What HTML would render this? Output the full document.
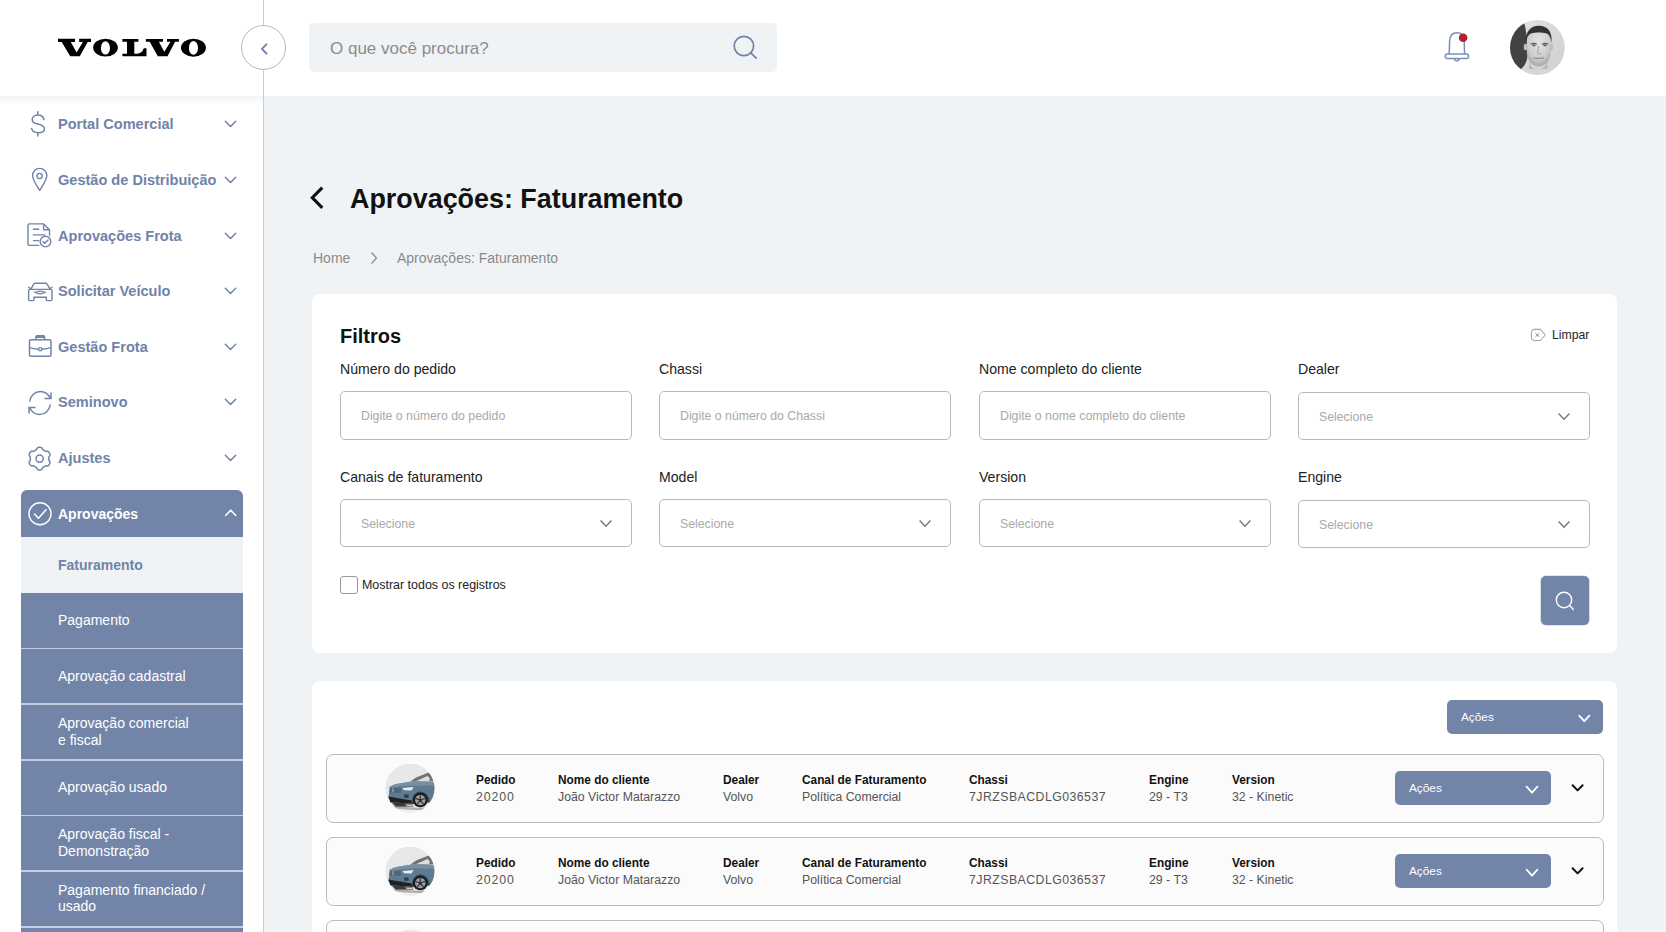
<!DOCTYPE html>
<html><head><meta charset="utf-8">
<style>
*{box-sizing:border-box;margin:0;padding:0}
html,body{width:1666px;height:932px;overflow:hidden;background:#eff3f6;font-family:"Liberation Sans",sans-serif;position:relative}
.a{position:absolute;white-space:nowrap;z-index:4}
#header{position:absolute;left:0;top:0;width:1666px;height:96px;background:#fff;z-index:2}
#sidebar{position:absolute;left:0;top:96px;width:263px;height:836px;background:#fff}
#vline{position:absolute;left:263px;top:0;width:1px;height:932px;background:#c5cddd;z-index:3}
.collapse{position:absolute;left:241px;top:25px;width:45px;height:45px;border:1px solid #aeb9d0;border-radius:50%;background:#fff;z-index:5}
.search{position:absolute;z-index:4;left:309px;top:23px;width:468px;height:49px;background:#eff3f6;border-radius:5px}
.mt{position:absolute;left:58px;font-size:14.55px;font-weight:bold;color:#7083a8;white-space:nowrap;line-height:18px}
.ic{position:absolute;left:26px;width:28px;height:28px}
.ch{position:absolute;left:223px;width:15px;height:10px}
.act{position:absolute;left:21px;top:490px;width:222px;height:442px;background:#7285a9;border-radius:6px 6px 0 0;overflow:hidden}
.sub{position:absolute;left:37px;color:#fff;font-size:14px;line-height:16.5px;white-space:nowrap}
.sep{position:absolute;left:0;width:222px;height:2px;background:#c3cce0}
.card{position:absolute;background:#fff;border-radius:8px}
.lbl{position:absolute;font-size:14.1px;color:#222;white-space:nowrap;line-height:18px}
.inp{position:absolute;width:291.5px;height:48.3px;border:1px solid #b9b9b9;border-radius:5px;background:#fff}
.inp span{position:absolute;left:20px;top:16.8px;font-size:12.3px;color:#a9a9a9;white-space:nowrap;line-height:15px}
.inp svg{position:absolute;left:258px;top:19.3px}
.row{position:absolute;left:326px;width:1278px;height:69px;border:1px solid #bbbbbb;border-radius:7px;background:#fbfbfb}
.rh{position:absolute;font-size:11.85px;font-weight:bold;color:#111;white-space:nowrap;line-height:14px}
.rv{position:absolute;font-size:12.3px;color:#555;white-space:nowrap;line-height:14px}
.btn{position:absolute;background:#7285a9;border-radius:5px}
.btn span{position:absolute;left:14px;font-size:11.8px;color:#fff;line-height:14px}
</style></head>
<body>
<div id="header"></div>
<div id="sidebar"></div>
<div style="position:absolute;left:0;top:96px;width:263px;height:8px;background:linear-gradient(#f0f3f7,rgba(255,255,255,0))"></div>
<div id="vline"></div>

<!-- logo -->
<svg class="a" style="left:0;top:0" width="263" height="96" viewBox="0 0 263 96">
<path fill="#000" d="M58 38.8 H75 V41.9 H70.8 L76.6 52.5 L82.9 41.9 H79.2 V38.8 H91 V41.9 H87.7 L79.8 56.3 H70.2 L61.7 41.9 H58 Z"/>
<path fill="#000" fill-rule="evenodd" d="M93.15 47.6 a12.35 8.9 0 1 0 24.7 0 a12.35 8.9 0 1 0 -24.7 0 Z M100.9 47.9 a4.55 6.7 0 1 0 9.1 0 a4.55 6.7 0 1 0 -9.1 0 Z"/>
<path fill="#000" d="M122.4 39.1 H138.4 V41.8 H134.3 V53.7 H137 Q142 53.7 143.8 48.3 H146.5 V56.2 H122.4 V53.7 H127 V41.8 H122.4 Z"/>
<path fill="#000" d="M145.9 39.1 H163 V41.8 H158.9 L164.3 51.8 L170.5 41.8 H167 V39.1 H178.9 V41.8 H175.1 L167.5 56.2 H157.8 L149.7 41.8 H145.9 Z"/>
<path fill="#000" fill-rule="evenodd" d="M181 47.7 a12.45 9 0 1 0 24.9 0 a12.45 9 0 1 0 -24.9 0 Z M188.9 47.9 a4.55 6.9 0 1 0 9.1 0 a4.55 6.9 0 1 0 -9.1 0 Z"/>
</svg>

<div class="collapse"><svg width="46" height="46" viewBox="0 0 46 46" style="position:absolute;left:-1px;top:-1px"><path d="M25.4 19.3 L20.9 23.9 L25.4 28.5" stroke="#7083a8" stroke-width="1.9" fill="none" stroke-linecap="round" stroke-linejoin="round"/></svg></div>

<div class="search"><span class="a" style="left:21px;top:16px;font-size:17px;color:#8c8c8c;line-height:20px">O que você procura?</span>
<svg class="a" style="left:421px;top:10px" width="30" height="30" viewBox="0 0 30 30"><circle cx="13.9" cy="13" r="9.7" stroke="#7083a8" stroke-width="1.7" fill="none"/><path d="M20.8 19.9 L26.2 25.2" stroke="#7083a8" stroke-width="1.7" stroke-linecap="round"/></svg>
</div>

<!-- bell -->
<svg class="a" style="left:1440px;top:28px" width="34" height="38" viewBox="0 0 34 38">
<path d="M9.2 26 L9.6 13.5 C9.8 8 12.5 4.8 16.9 4.8 C21.3 4.8 24 8 24.2 13.5 L24.6 26" stroke="#7a8fb8" stroke-width="1.5" fill="none"/>
<rect x="5.2" y="26" width="23.4" height="4.6" rx="2.3" stroke="#7a8fb8" stroke-width="1.5" fill="#fff"/>
<path d="M14.6 30.6 A2.3 2.3 0 0 0 19.2 30.6" stroke="#7a8fb8" stroke-width="1.5" fill="none"/>
<circle cx="23.1" cy="9.8" r="4.3" fill="#b3202e"/>
</svg>
<!-- avatar -->
<svg class="a" style="left:1509px;top:19px" width="58" height="58" viewBox="0 0 58 58">
<defs><clipPath id="av"><circle cx="28.4" cy="28.4" r="27.4"/></clipPath>
<linearGradient id="bgg" x1="0" y1="0" x2="1" y2="1"><stop offset="0" stop-color="#e2e2e2"/><stop offset="1" stop-color="#cfcfcf"/></linearGradient>
<radialGradient id="fg" cx="0.5" cy="0.35" r="0.65"><stop offset="0" stop-color="#e4e4e4"/><stop offset="0.7" stop-color="#cdcdcd"/><stop offset="1" stop-color="#a8a8a8"/></radialGradient></defs>
<g clip-path="url(#av)">
<rect width="58" height="58" fill="url(#bgg)"/>
<path d="M0 0 H14.3 C17 10 18.4 20 18.6 30 C18.8 38 18.8 44 11.9 50 L0 58 Z" fill="#424242"/>
<path d="M12 58 C14 52 18 49 22 47 H36 C40 49 44 52 46 58 Z" fill="#d6d6d6"/>
<path d="M20 42 C21 47 24 50 29 50.5 C34 50 37 47 38.5 42 L38.5 50 H20 Z" fill="#b9b9b9"/>
<ellipse cx="16.6" cy="28" rx="1.9" ry="3.3" fill="#bdbdbd"/>
<ellipse cx="42.3" cy="28" rx="1.9" ry="3.3" fill="#bdbdbd"/>
<path d="M17.8 22 C17.8 14 22 10 29.8 10 C37.5 10 41.6 14 41.6 22 V32 C41.6 41 36.5 47.5 29.7 47.5 C22.9 47.5 17.8 41 17.8 32 Z" fill="url(#fg)"/>
<path d="M16.8 24 C16 14 20.5 6.7 29.8 6.7 C39 6.7 43.5 13 42.6 24 C41.8 19 40.5 15.5 37 14.3 C33 13.3 26 13.3 22 14.5 C19 15.8 17.8 19 16.8 24 Z" fill="#333"/>
<path d="M21.6 25.2 C23.5 24.2 26 24.2 28 25.4 M32.8 25.4 C34.8 24.2 37.3 24.2 39.2 25.2" stroke="#5a5a5a" stroke-width="1.1" fill="none"/>
<ellipse cx="25" cy="26.3" rx="1.8" ry="0.9" fill="#555"/>
<ellipse cx="36" cy="26.3" rx="1.8" ry="0.9" fill="#555"/>
<path d="M29.5 27 C29.2 31 28.5 33 28.6 34.5 C29.5 35.2 31 35.2 32 34.5" stroke="#9a9a9a" stroke-width="0.9" fill="none"/>
<path d="M24.5 38.8 C27 39.6 32 39.6 35 38.8" stroke="#7c7c7c" stroke-width="1" fill="none"/>
</g>
</svg>

<!-- sidebar menu -->
<svg class="ic" style="top:110px" viewBox="0 0 28 28"><path d="M11.75 1.8 V5 M18 9.5 C17.3 6.5 15 5 11.9 5 C8.5 5 6.2 7 6.2 9.7 C6.2 12.5 8.8 13.4 11.8 14.1 C15.5 15 18.5 16 18.5 18.7 C18.5 21.2 15.8 22.7 12 22.7 C8.7 22.7 6.2 21 5.5 18.4 M11.75 22.7 V25.9" stroke="#7083a8" stroke-width="1.5" fill="none" stroke-linecap="round"/></svg>
<div class="mt" style="top:114.9px">Portal Comercial</div>
<svg class="ch" style="top:119px" viewBox="0 0 15 10"><path d="M2.3 2.3 L7.5 7.5 L12.7 2.3" stroke="#7083a8" stroke-width="1.5" fill="none" stroke-linecap="round" stroke-linejoin="round"/></svg>

<svg class="ic" style="top:166px" viewBox="0 0 28 28"><path d="M13.7 24.4 C9.7 18.5 6.6 14 6.6 9.6 C6.6 5.6 9.8 2.4 13.7 2.4 C17.6 2.4 20.8 5.6 20.8 9.6 C20.8 14 17.7 18.5 13.7 24.4 Z" stroke="#7083a8" stroke-width="1.4" fill="none" stroke-linejoin="round"/><circle cx="13.6" cy="10" r="2.6" stroke="#7083a8" stroke-width="1.4" fill="none"/></svg>
<div class="mt" style="top:170.9px">Gestão de Distribuição</div>
<svg class="ch" style="top:175px" viewBox="0 0 15 10"><path d="M2.3 2.3 L7.5 7.5 L12.7 2.3" stroke="#7083a8" stroke-width="1.5" fill="none" stroke-linecap="round" stroke-linejoin="round"/></svg>

<svg class="ic" style="top:222px" viewBox="0 0 28 28"><path d="M13.3 23.4 H3.5 C2.6 23.4 2 22.8 2 21.9 V3.4 C2 2.5 2.6 1.9 3.5 1.9 H17.6 L23.5 7.8 V13.7" stroke="#7083a8" stroke-width="1.4" fill="none" stroke-linejoin="round"/><path d="M17.6 1.9 V7.8 H23.5" stroke="#7083a8" stroke-width="1.4" fill="none" stroke-linejoin="round"/><path d="M6.9 7.3 H13.3 M6.9 12.9 H19.2 M6.9 18.6 H13.3" stroke="#7083a8" stroke-width="1.4"/><circle cx="19.5" cy="19.6" r="5.3" stroke="#7083a8" stroke-width="1.4" fill="#fff"/><path d="M16.8 19.5 L18.8 21.3 L22.1 18" stroke="#7083a8" stroke-width="1.4" fill="none" stroke-linecap="round" stroke-linejoin="round"/></svg>
<div class="mt" style="top:226.9px">Aprovações Frota</div>
<svg class="ch" style="top:231px" viewBox="0 0 15 10"><path d="M2.3 2.3 L7.5 7.5 L12.7 2.3" stroke="#7083a8" stroke-width="1.5" fill="none" stroke-linecap="round" stroke-linejoin="round"/></svg>

<svg class="ic" style="top:277px" viewBox="0 0 28 28"><path d="M4.7 12.4 L7.6 7.3 C8 6.6 8.6 6.2 9.4 6.2 H19.4 C20.2 6.2 20.8 6.6 21.2 7.3 L24.3 12.4" stroke="#7083a8" stroke-width="1.4" fill="none" stroke-linejoin="round"/><path d="M2.6 10.3 L5.5 12.4 M26 10.3 L23.2 12.4" stroke="#7083a8" stroke-width="1.4" stroke-linecap="round"/><path d="M4 12.4 H24.8 C25.5 12.4 26 12.9 26 13.6 V22.6 C26 23.2 25.6 23.6 25 23.6 H21.2 C20.6 23.6 20.3 23.2 20.3 22.6 V20.3 H7.9 V22.6 C7.9 23.2 7.5 23.6 6.9 23.6 H3.6 C3 23.6 2.6 23.2 2.6 22.6 V13.6 C2.6 12.9 3.2 12.4 4 12.4 Z" stroke="#7083a8" stroke-width="1.4" fill="none" stroke-linejoin="round"/><path d="M7.9 14.8 C10 16.3 12 16.8 14.2 16.8 C16.4 16.8 18.3 16.3 20 14.8 M9.5 15.5 L12 14.4 H16.5 L18.5 15.5" stroke="#7083a8" stroke-width="1.3" fill="none"/></svg>
<div class="mt" style="top:281.9px">Solicitar Veículo</div>
<svg class="ch" style="top:286px" viewBox="0 0 15 10"><path d="M2.3 2.3 L7.5 7.5 L12.7 2.3" stroke="#7083a8" stroke-width="1.5" fill="none" stroke-linecap="round" stroke-linejoin="round"/></svg>

<svg class="ic" style="top:332px" viewBox="0 0 28 28"><rect x="3.5" y="7.8" width="21.5" height="16.4" rx="1.3" stroke="#7083a8" stroke-width="1.5" fill="none"/><path d="M10 7.8 V4.6 C10 4.1 10.3 3.8 10.8 3.8 H17.7 C18.2 3.8 18.5 4.1 18.5 4.6 V7.8 M10.5 5.2 H18" stroke="#7083a8" stroke-width="1.5" fill="none"/><path d="M3.5 15.6 C8 16.8 11 17.2 12.7 17.2 M15.8 17.2 C17.5 17.2 20.5 16.8 25 15.6" stroke="#7083a8" stroke-width="1.5" fill="none"/><circle cx="14.2" cy="17.2" r="1.6" stroke="#7083a8" stroke-width="1.4" fill="none"/></svg>
<div class="mt" style="top:337.9px">Gestão Frota</div>
<svg class="ch" style="top:342px" viewBox="0 0 15 10"><path d="M2.3 2.3 L7.5 7.5 L12.7 2.3" stroke="#7083a8" stroke-width="1.5" fill="none" stroke-linecap="round" stroke-linejoin="round"/></svg>

<svg class="ic" style="top:388.8px" viewBox="0 0 28 28"><path d="M3.6 12.5 C4.6 6.5 9 2.5 14.3 2.5 C18.7 2.5 22.3 5 24.1 9 M24.4 15.5 C23.4 21.5 19 25.5 13.7 25.5 C9.3 25.5 5.7 23 3.9 19" stroke="#7083a8" stroke-width="1.5" fill="none"/><path d="M25 3.5 V9.6 H18.5 M3 24.5 V18.4 H9.5" stroke="#7083a8" stroke-width="1.5" fill="none"/></svg>
<div class="mt" style="top:392.9px">Seminovo</div>
<svg class="ch" style="top:397px" viewBox="0 0 15 10"><path d="M2.3 2.3 L7.5 7.5 L12.7 2.3" stroke="#7083a8" stroke-width="1.5" fill="none" stroke-linecap="round" stroke-linejoin="round"/></svg>

<svg class="ic" style="top:443.8px" viewBox="0 0 28 28"><path d="M22.90 14.60 L22.90 15.01 L22.88 15.41 L22.88 15.82 L22.94 16.25 L23.14 16.72 L23.55 17.27 L23.93 17.86 L24.05 18.40 L23.98 18.90 L23.82 19.37 L23.62 19.82 L23.39 20.25 L23.13 20.67 L22.84 21.07 L22.52 21.44 L22.12 21.75 L21.58 21.92 L20.88 21.88 L20.20 21.80 L19.69 21.86 L19.30 22.03 L18.95 22.23 L18.60 22.45 L18.25 22.65 L17.90 22.85 L17.54 23.05 L17.18 23.25 L16.84 23.51 L16.54 23.92 L16.27 24.55 L15.94 25.17 L15.53 25.55 L15.07 25.74 L14.58 25.84 L14.09 25.89 L13.60 25.90 L13.11 25.89 L12.62 25.84 L12.13 25.74 L11.67 25.55 L11.26 25.17 L10.93 24.55 L10.66 23.92 L10.36 23.51 L10.02 23.25 L9.66 23.05 L9.30 22.85 L8.95 22.65 L8.60 22.45 L8.25 22.23 L7.90 22.03 L7.51 21.86 L7.00 21.80 L6.32 21.88 L5.62 21.92 L5.08 21.75 L4.68 21.44 L4.36 21.07 L4.07 20.67 L3.81 20.25 L3.58 19.82 L3.38 19.37 L3.22 18.90 L3.15 18.40 L3.27 17.86 L3.65 17.27 L4.06 16.72 L4.26 16.25 L4.32 15.82 L4.32 15.41 L4.30 15.01 L4.30 14.60 L4.30 14.19 L4.32 13.79 L4.32 13.38 L4.26 12.95 L4.06 12.48 L3.65 11.93 L3.27 11.34 L3.15 10.80 L3.22 10.30 L3.38 9.83 L3.58 9.38 L3.81 8.95 L4.07 8.53 L4.36 8.13 L4.68 7.76 L5.08 7.45 L5.62 7.28 L6.32 7.32 L7.00 7.40 L7.51 7.34 L7.90 7.17 L8.25 6.97 L8.60 6.75 L8.95 6.55 L9.30 6.35 L9.66 6.15 L10.02 5.95 L10.36 5.69 L10.66 5.28 L10.93 4.65 L11.26 4.03 L11.67 3.65 L12.13 3.46 L12.62 3.36 L13.11 3.31 L13.60 3.30 L14.09 3.31 L14.58 3.36 L15.07 3.46 L15.53 3.65 L15.94 4.03 L16.27 4.65 L16.54 5.28 L16.84 5.69 L17.18 5.95 L17.54 6.15 L17.90 6.35 L18.25 6.55 L18.60 6.75 L18.95 6.97 L19.30 7.17 L19.69 7.34 L20.20 7.40 L20.88 7.32 L21.58 7.28 L22.12 7.45 L22.52 7.76 L22.84 8.13 L23.13 8.53 L23.39 8.95 L23.62 9.38 L23.82 9.83 L23.98 10.30 L24.05 10.80 L23.93 11.34 L23.55 11.93 L23.14 12.48 L22.94 12.95 L22.88 13.38 L22.88 13.79 L22.90 14.19 Z" stroke="#7083a8" stroke-width="1.5" fill="none" stroke-linejoin="round"/><circle cx="13.6" cy="14.6" r="3.6" stroke="#7083a8" stroke-width="1.5" fill="none"/></svg>
<div class="mt" style="top:448.9px">Ajustes</div>
<svg class="ch" style="top:453px" viewBox="0 0 15 10"><path d="M2.3 2.3 L7.5 7.5 L12.7 2.3" stroke="#7083a8" stroke-width="1.5" fill="none" stroke-linecap="round" stroke-linejoin="round"/></svg>

<!-- active group -->
<div class="act">
  <svg class="a" style="left:5px;top:10px" width="28" height="28" viewBox="0 0 28 28"><circle cx="14" cy="13.8" r="11" stroke="#fff" stroke-width="1.4" fill="none"/><path d="M8.5 14 L12.5 18.2 L20 9.8" stroke="#fff" stroke-width="1.5" fill="none" stroke-linecap="round" stroke-linejoin="round"/></svg>
  <div class="a" style="left:37px;top:14.8px;font-size:14px;font-weight:bold;color:#fff;line-height:18px">Aprovações</div>
  <svg class="a" style="left:202px;top:17px" width="15" height="10" viewBox="0 0 15 10"><path d="M2.8 8.3 L7.7 3.2 L12.6 8.3" stroke="#fff" stroke-width="1.6" fill="none" stroke-linecap="round" stroke-linejoin="round"/></svg>
  <div class="a" style="left:0;top:47px;width:222px;height:55.6px;background:#eff3f6"></div>
  <div class="a" style="left:37px;top:67.3px;font-size:14px;font-weight:bold;color:#7083a8;line-height:17px">Faturamento</div>
  <div class="sub" style="top:122px">Pagamento</div>
  <div class="sep" style="top:157.5px;height:1.5px"></div>
  <div class="sub" style="top:177.5px">Aprovação cadastral</div>
  <div class="sep" style="top:213px;height:1.5px"></div>
  <div class="sub" style="top:225px">Aprovação comercial<br>e fiscal</div>
  <div class="sep" style="top:269px;height:1.5px"></div>
  <div class="sub" style="top:289px">Aprovação usado</div>
  <div class="sep" style="top:324.5px;height:1.5px"></div>
  <div class="sub" style="top:336px">Aprovação fiscal -<br>Demonstração</div>
  <div class="sep" style="top:380px;height:1.5px"></div>
  <div class="sub" style="top:391.5px">Pagamento financiado /<br>usado</div>
  <div class="sep" style="top:436px;height:1.5px"></div>
</div>

<!-- title -->
<svg class="a" style="left:306px;top:183px" width="22" height="30" viewBox="0 0 22 30"><path d="M16.3 4.6 L6.3 14.7 L16.3 24.8" stroke="#111" stroke-width="3.1" fill="none" stroke-linecap="butt" stroke-linejoin="miter"/></svg>
<div class="a" style="left:350px;top:182.8px;font-size:26.9px;font-weight:bold;color:#111;line-height:32px">Aprovações: Faturamento</div>
<div class="a" style="left:313px;top:250px;font-size:14px;color:#8a8a8a;line-height:17px">Home</div>
<svg class="a" style="left:366px;top:250px" width="16" height="16" viewBox="0 0 16 16"><path d="M5.5 2.5 L10.5 8 L5.5 13.5" stroke="#8a8a8a" stroke-width="1.3" fill="none"/></svg>
<div class="a" style="left:397px;top:250px;font-size:14px;color:#8a8a8a;line-height:17px">Aprovações: Faturamento</div>

<!-- filters card -->
<div class="card" style="left:312px;top:294px;width:1305px;height:359px"></div>
<div class="a" style="left:340px;top:323.5px;font-size:20px;font-weight:bold;color:#111;line-height:24px">Filtros</div>
<svg class="a" style="left:1530px;top:328px" width="17" height="14" viewBox="0 0 17 14"><path d="M4.7 1.4 H10.3 L15.3 7 L10.3 12.5 H4.7 C2.8 12.5 1.4 11.1 1.4 9.2 V4.7 C1.4 2.8 2.8 1.4 4.7 1.4 Z" stroke="#a5a5a5" stroke-width="1.1" fill="none" stroke-linejoin="round"/><path d="M5.4 5.2 L9.3 8.9 M9.3 5.2 L5.4 8.9" stroke="#8a8a8a" stroke-width="1"/></svg>
<div class="a" style="left:1552px;top:327px;font-size:12.2px;color:#222;line-height:16px">Limpar</div>

<div class="lbl" style="left:340px;top:360px">Número do pedido</div>
<div class="inp" style="left:340px;top:391.4px"><span>Digite o número do pedido</span></div>
<div class="lbl" style="left:659px;top:360px">Chassi</div>
<div class="inp" style="left:659px;top:391.4px"><span>Digite o número do Chassi</span></div>
<div class="lbl" style="left:979px;top:360px">Nome completo do cliente</div>
<div class="inp" style="left:979px;top:391.4px"><span>Digite o nome completo do cliente</span></div>
<div class="lbl" style="left:1298px;top:360px">Dealer</div>
<div class="inp" style="left:1298px;top:392px"><span>Selecione</span><svg width="14" height="9" viewBox="0 0 14 9"><path d="M1.6 1.5 L7 7.2 L12.4 1.5" stroke="#777" stroke-width="1.4" fill="none"/></svg></div>

<div class="lbl" style="left:340px;top:468px">Canais de faturamento</div>
<div class="inp" style="left:340px;top:499px"><span>Selecione</span><svg width="14" height="9" viewBox="0 0 14 9"><path d="M1.6 1.5 L7 7.2 L12.4 1.5" stroke="#777" stroke-width="1.4" fill="none"/></svg></div>
<div class="lbl" style="left:659px;top:468px">Model</div>
<div class="inp" style="left:659px;top:499px"><span>Selecione</span><svg width="14" height="9" viewBox="0 0 14 9"><path d="M1.6 1.5 L7 7.2 L12.4 1.5" stroke="#777" stroke-width="1.4" fill="none"/></svg></div>
<div class="lbl" style="left:979px;top:468px">Version</div>
<div class="inp" style="left:979px;top:499px"><span>Selecione</span><svg width="14" height="9" viewBox="0 0 14 9"><path d="M1.6 1.5 L7 7.2 L12.4 1.5" stroke="#777" stroke-width="1.4" fill="none"/></svg></div>
<div class="lbl" style="left:1298px;top:468px">Engine</div>
<div class="inp" style="left:1298px;top:500px"><span>Selecione</span><svg width="14" height="9" viewBox="0 0 14 9"><path d="M1.6 1.5 L7 7.2 L12.4 1.5" stroke="#777" stroke-width="1.4" fill="none"/></svg></div>

<div class="a" style="left:340px;top:576px;width:17.5px;height:17.5px;border:1px solid #9a9a9a;border-radius:3px;background:#fff"></div>
<div class="a" style="left:362px;top:576.8px;font-size:12.45px;color:#222;line-height:16px">Mostrar todos os registros</div>
<div class="btn" style="left:1541.3px;top:576.4px;width:48.2px;height:48.3px;box-shadow:0 0 0 0.6px rgba(90,100,120,0.35)"><svg class="a" style="left:13px;top:13.3px" width="22" height="22" viewBox="0 0 22 22"><circle cx="10" cy="10" r="7.7" stroke="#fff" stroke-width="1.4" fill="none"/><path d="M15.6 15.6 L19.4 19.4" stroke="#fff" stroke-width="1.4" stroke-linecap="round"/></svg></div>

<!-- table card -->
<div class="card" style="left:312px;top:680.5px;width:1305px;height:300px"></div>
<div class="btn" style="left:1447px;top:700px;width:156px;height:34px"><span style="top:10px">Ações</span><svg class="a" style="left:129px;top:13px" width="15" height="11" viewBox="0 0 15 11"><path d="M3.2 2.6 L8.3 8.2 L13.4 2.6" stroke="#fff" stroke-width="1.8" fill="none" stroke-linecap="round" stroke-linejoin="round"/></svg></div>

<div class="row" style="top:753.5px"></div>
<svg class="a" style="left:385px;top:764px" width="50" height="50" viewBox="0 0 50 50"><defs><clipPath id="cc0"><circle cx="25" cy="24.2" r="24.5"/></clipPath></defs><g clip-path="url(#cc0)"><rect width="50" height="50" fill="#e8e8e8"/><path d="M0 44 H50 V50 H0 Z" fill="#efefef"/><path d="M25.2 17.8 L31 13.5 L43.6 8.6 L46.4 10.8 L48.7 17.5 Z" fill="#727272"/><path d="M31.4 17 L42.5 12 L44.8 14.2 L44.2 17 Z" fill="#dedede"/><path d="M4.6 23.1 C8 21 10 20.3 13 19.8 L25.2 17.8 L46.4 18.1 L50 19 V38 L46.4 37.5 L27 40 L3.6 33.7 Z" fill="#5e7b91"/><path d="M4.6 23.1 C8 21 10 20.3 13 19.8 L25.2 17.8 L46.4 18.1 L50 19 V21.5 L28 21.6 L14 22.6 L5 24.5 Z" fill="#7690a5"/><path d="M5.1 23.7 H15.7 L16.2 28.7 H4.6 Z" fill="#4e6679"/><path d="M8 24.2 V28.3" stroke="#c5cfd6" stroke-width="0.8"/><path d="M17.4 24 L28.6 23.1 L26.5 26.5 L19 26.2 Z" fill="#e6ebef"/><path d="M19.1 30.4 H23.6 V33.7 H19.1 Z" fill="#2f3b45"/><path d="M3.2 32.6 L26.9 36.5 L26.5 39.6 L5.5 38.6 Z" fill="#1d2024"/><path d="M6.5 38.6 L27 39.6 L28.5 42.5 L11 42.8 Z" fill="#3a3a3a"/><path d="M20 40.5 L27 40.6 L28 42 L22 42 Z" fill="#cfcfcf"/><path d="M26.5 40 C27 31.5 30.8 27.6 35.3 27.6 C40 27.6 44 31 44.8 38.5 Z" fill="#34444f"/><circle cx="35.3" cy="36" r="7.3" fill="#1a1a1a"/><circle cx="35.3" cy="36" r="5.3" fill="#9a9ea2"/><path d="M35.3 36 L35.3 30.8 M35.3 36 L40.3 34.4 M35.3 36 L38.4 40.2 M35.3 36 L32.2 40.2 M35.3 36 L30.3 34.4" stroke="#3a3a3a" stroke-width="1.3"/><circle cx="35.3" cy="36" r="1.2" fill="#2a2a2a"/><path d="M7.4 41.5 C20 43.5 35 44.5 46.4 42.8 V45.4 C35 46.5 20 46 7.4 44 Z" fill="#777" opacity="0.55"/></g></svg>
<div class="rh" style="left:476px;top:773px">Pedido</div><div class="rv" style="left:476px;top:790px;letter-spacing:0.9px">20200</div>
<div class="rh" style="left:558px;top:773px">Nome do cliente</div><div class="rv" style="left:558px;top:790px">João Victor Matarazzo</div>
<div class="rh" style="left:723px;top:773px">Dealer</div><div class="rv" style="left:723px;top:790px">Volvo</div>
<div class="rh" style="left:802px;top:773px">Canal de Faturamento</div><div class="rv" style="left:802px;top:790px">Política Comercial</div>
<div class="rh" style="left:969px;top:773px">Chassi</div><div class="rv" style="left:969px;top:790px;letter-spacing:0.46px">7JRZSBACDLG036537</div>
<div class="rh" style="left:1149px;top:773px">Engine</div><div class="rv" style="left:1149px;top:790px">29 - T3</div>
<div class="rh" style="left:1232px;top:773px">Version</div><div class="rv" style="left:1232px;top:790px">32 - Kinetic</div>
<div class="btn" style="left:1395px;top:771px;width:156px;height:34px"><span style="top:10px">Ações</span><svg class="a" style="left:128px;top:13px" width="16" height="11" viewBox="0 0 16 11"><path d="M3.6 2.6 L9 8.6 L14.4 2.6" stroke="#fff" stroke-width="1.8" fill="none" stroke-linecap="round" stroke-linejoin="round"/></svg></div>
<svg class="a" style="left:1570px;top:783px" width="15" height="10" viewBox="0 0 15 10"><path d="M2.6 2.3 L7.6 7.4 L12.6 2.3" stroke="#111" stroke-width="2" fill="none" stroke-linecap="round" stroke-linejoin="round"/></svg>
<div class="row" style="top:836.5px"></div>
<svg class="a" style="left:385px;top:847px" width="50" height="50" viewBox="0 0 50 50"><defs><clipPath id="cc1"><circle cx="25" cy="24.2" r="24.5"/></clipPath></defs><g clip-path="url(#cc1)"><rect width="50" height="50" fill="#e8e8e8"/><path d="M0 44 H50 V50 H0 Z" fill="#efefef"/><path d="M25.2 17.8 L31 13.5 L43.6 8.6 L46.4 10.8 L48.7 17.5 Z" fill="#727272"/><path d="M31.4 17 L42.5 12 L44.8 14.2 L44.2 17 Z" fill="#dedede"/><path d="M4.6 23.1 C8 21 10 20.3 13 19.8 L25.2 17.8 L46.4 18.1 L50 19 V38 L46.4 37.5 L27 40 L3.6 33.7 Z" fill="#5e7b91"/><path d="M4.6 23.1 C8 21 10 20.3 13 19.8 L25.2 17.8 L46.4 18.1 L50 19 V21.5 L28 21.6 L14 22.6 L5 24.5 Z" fill="#7690a5"/><path d="M5.1 23.7 H15.7 L16.2 28.7 H4.6 Z" fill="#4e6679"/><path d="M8 24.2 V28.3" stroke="#c5cfd6" stroke-width="0.8"/><path d="M17.4 24 L28.6 23.1 L26.5 26.5 L19 26.2 Z" fill="#e6ebef"/><path d="M19.1 30.4 H23.6 V33.7 H19.1 Z" fill="#2f3b45"/><path d="M3.2 32.6 L26.9 36.5 L26.5 39.6 L5.5 38.6 Z" fill="#1d2024"/><path d="M6.5 38.6 L27 39.6 L28.5 42.5 L11 42.8 Z" fill="#3a3a3a"/><path d="M20 40.5 L27 40.6 L28 42 L22 42 Z" fill="#cfcfcf"/><path d="M26.5 40 C27 31.5 30.8 27.6 35.3 27.6 C40 27.6 44 31 44.8 38.5 Z" fill="#34444f"/><circle cx="35.3" cy="36" r="7.3" fill="#1a1a1a"/><circle cx="35.3" cy="36" r="5.3" fill="#9a9ea2"/><path d="M35.3 36 L35.3 30.8 M35.3 36 L40.3 34.4 M35.3 36 L38.4 40.2 M35.3 36 L32.2 40.2 M35.3 36 L30.3 34.4" stroke="#3a3a3a" stroke-width="1.3"/><circle cx="35.3" cy="36" r="1.2" fill="#2a2a2a"/><path d="M7.4 41.5 C20 43.5 35 44.5 46.4 42.8 V45.4 C35 46.5 20 46 7.4 44 Z" fill="#777" opacity="0.55"/></g></svg>
<div class="rh" style="left:476px;top:856px">Pedido</div><div class="rv" style="left:476px;top:873px;letter-spacing:0.9px">20200</div>
<div class="rh" style="left:558px;top:856px">Nome do cliente</div><div class="rv" style="left:558px;top:873px">João Victor Matarazzo</div>
<div class="rh" style="left:723px;top:856px">Dealer</div><div class="rv" style="left:723px;top:873px">Volvo</div>
<div class="rh" style="left:802px;top:856px">Canal de Faturamento</div><div class="rv" style="left:802px;top:873px">Política Comercial</div>
<div class="rh" style="left:969px;top:856px">Chassi</div><div class="rv" style="left:969px;top:873px;letter-spacing:0.46px">7JRZSBACDLG036537</div>
<div class="rh" style="left:1149px;top:856px">Engine</div><div class="rv" style="left:1149px;top:873px">29 - T3</div>
<div class="rh" style="left:1232px;top:856px">Version</div><div class="rv" style="left:1232px;top:873px">32 - Kinetic</div>
<div class="btn" style="left:1395px;top:854px;width:156px;height:34px"><span style="top:10px">Ações</span><svg class="a" style="left:128px;top:13px" width="16" height="11" viewBox="0 0 16 11"><path d="M3.6 2.6 L9 8.6 L14.4 2.6" stroke="#fff" stroke-width="1.8" fill="none" stroke-linecap="round" stroke-linejoin="round"/></svg></div>
<svg class="a" style="left:1570px;top:866px" width="15" height="10" viewBox="0 0 15 10"><path d="M2.6 2.3 L7.6 7.4 L12.6 2.3" stroke="#111" stroke-width="2" fill="none" stroke-linecap="round" stroke-linejoin="round"/></svg>
<div class="row" style="top:919.5px"></div>
<svg class="a" style="left:385px;top:930px" width="50" height="50" viewBox="0 0 50 50"><defs><clipPath id="cc2"><circle cx="25" cy="24.2" r="24.5"/></clipPath></defs><g clip-path="url(#cc2)"><rect width="50" height="50" fill="#e8e8e8"/><path d="M0 44 H50 V50 H0 Z" fill="#efefef"/><path d="M25.2 17.8 L31 13.5 L43.6 8.6 L46.4 10.8 L48.7 17.5 Z" fill="#727272"/><path d="M31.4 17 L42.5 12 L44.8 14.2 L44.2 17 Z" fill="#dedede"/><path d="M4.6 23.1 C8 21 10 20.3 13 19.8 L25.2 17.8 L46.4 18.1 L50 19 V38 L46.4 37.5 L27 40 L3.6 33.7 Z" fill="#5e7b91"/><path d="M4.6 23.1 C8 21 10 20.3 13 19.8 L25.2 17.8 L46.4 18.1 L50 19 V21.5 L28 21.6 L14 22.6 L5 24.5 Z" fill="#7690a5"/><path d="M5.1 23.7 H15.7 L16.2 28.7 H4.6 Z" fill="#4e6679"/><path d="M8 24.2 V28.3" stroke="#c5cfd6" stroke-width="0.8"/><path d="M17.4 24 L28.6 23.1 L26.5 26.5 L19 26.2 Z" fill="#e6ebef"/><path d="M19.1 30.4 H23.6 V33.7 H19.1 Z" fill="#2f3b45"/><path d="M3.2 32.6 L26.9 36.5 L26.5 39.6 L5.5 38.6 Z" fill="#1d2024"/><path d="M6.5 38.6 L27 39.6 L28.5 42.5 L11 42.8 Z" fill="#3a3a3a"/><path d="M20 40.5 L27 40.6 L28 42 L22 42 Z" fill="#cfcfcf"/><path d="M26.5 40 C27 31.5 30.8 27.6 35.3 27.6 C40 27.6 44 31 44.8 38.5 Z" fill="#34444f"/><circle cx="35.3" cy="36" r="7.3" fill="#1a1a1a"/><circle cx="35.3" cy="36" r="5.3" fill="#9a9ea2"/><path d="M35.3 36 L35.3 30.8 M35.3 36 L40.3 34.4 M35.3 36 L38.4 40.2 M35.3 36 L32.2 40.2 M35.3 36 L30.3 34.4" stroke="#3a3a3a" stroke-width="1.3"/><circle cx="35.3" cy="36" r="1.2" fill="#2a2a2a"/><path d="M7.4 41.5 C20 43.5 35 44.5 46.4 42.8 V45.4 C35 46.5 20 46 7.4 44 Z" fill="#777" opacity="0.55"/></g></svg>
<div class="rh" style="left:476px;top:939px">Pedido</div><div class="rv" style="left:476px;top:956px;letter-spacing:0.9px">20200</div>
<div class="rh" style="left:558px;top:939px">Nome do cliente</div><div class="rv" style="left:558px;top:956px">João Victor Matarazzo</div>
<div class="rh" style="left:723px;top:939px">Dealer</div><div class="rv" style="left:723px;top:956px">Volvo</div>
<div class="rh" style="left:802px;top:939px">Canal de Faturamento</div><div class="rv" style="left:802px;top:956px">Política Comercial</div>
<div class="rh" style="left:969px;top:939px">Chassi</div><div class="rv" style="left:969px;top:956px;letter-spacing:0.46px">7JRZSBACDLG036537</div>
<div class="rh" style="left:1149px;top:939px">Engine</div><div class="rv" style="left:1149px;top:956px">29 - T3</div>
<div class="rh" style="left:1232px;top:939px">Version</div><div class="rv" style="left:1232px;top:956px">32 - Kinetic</div>
<div class="btn" style="left:1395px;top:937px;width:156px;height:34px"><span style="top:10px">Ações</span><svg class="a" style="left:128px;top:13px" width="16" height="11" viewBox="0 0 16 11"><path d="M3.6 2.6 L9 8.6 L14.4 2.6" stroke="#fff" stroke-width="1.8" fill="none" stroke-linecap="round" stroke-linejoin="round"/></svg></div>
<svg class="a" style="left:1570px;top:949px" width="15" height="10" viewBox="0 0 15 10"><path d="M2.6 2.3 L7.6 7.4 L12.6 2.3" stroke="#111" stroke-width="2" fill="none" stroke-linecap="round" stroke-linejoin="round"/></svg>
</body></html>
